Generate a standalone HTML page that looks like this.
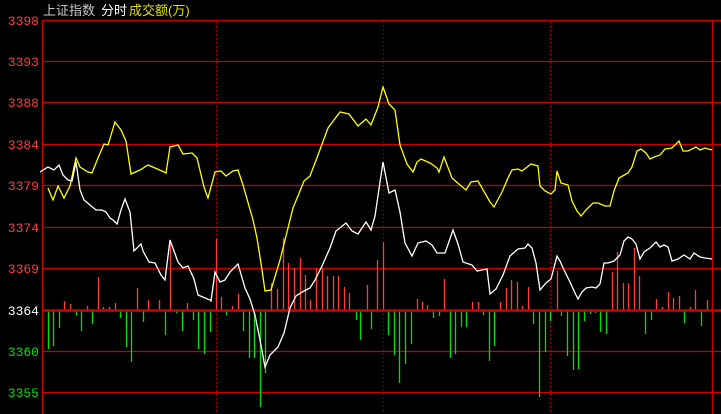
<!DOCTYPE html>
<html><head><meta charset="utf-8"><style>
html,body{margin:0;padding:0;background:#000;width:721px;height:414px;overflow:hidden}
svg{display:block}
text{font-family:"Liberation Sans","Noto Sans CJK SC",sans-serif;font-size:13px}
.ax{font-family:"Liberation Mono","DejaVu Sans Mono",monospace;font-size:13px}
</style></head><body>
<svg width="721" height="414" viewBox="0 0 721 414" xmlns="http://www.w3.org/2000/svg">
<rect width="721" height="414" fill="#000"/>
<text x="43" y="15" fill="#c8c8c8">上证指数</text>
<text x="101" y="15" fill="#ffffff">分时</text>
<text x="129" y="15" fill="#e0e000">成交额(万)</text>
<g stroke="#c80000" stroke-width="1.3">
<line x1="42" y1="20.5" x2="721" y2="20.5"/>
<line x1="42" y1="61.5" x2="721" y2="61.5"/>
<line x1="42" y1="102.5" x2="721" y2="102.5"/>
<line x1="42" y1="144.5" x2="721" y2="144.5"/>
<line x1="42" y1="185.5" x2="721" y2="185.5"/>
<line x1="42" y1="227.5" x2="721" y2="227.5"/>
<line x1="42" y1="268.5" x2="721" y2="268.5"/>
<line x1="42" y1="351.5" x2="721" y2="351.5"/>
<line x1="42" y1="392.5" x2="721" y2="392.5"/>
<line x1="42.5" y1="20" x2="42.5" y2="414"/>
<line x1="712.5" y1="20" x2="712.5" y2="414"/>
</g>
<g stroke="#c80000" stroke-width="1" stroke-dasharray="1,3">
<line x1="216.5" y1="22" x2="216.5" y2="414"/>
<line x1="383.5" y1="22" x2="383.5" y2="414"/>
<line x1="550.5" y1="22" x2="550.5" y2="414"/>
</g>
<g class="ax" text-anchor="end">
<text class="ax" x="39" y="25" fill="#ff3c3c">3398</text>
<text class="ax" x="39" y="66" fill="#ff3c3c">3393</text>
<text class="ax" x="39" y="107" fill="#ff3c3c">3388</text>
<text class="ax" x="39" y="149" fill="#ff3c3c">3384</text>
<text class="ax" x="39" y="190" fill="#ff3c3c">3379</text>
<text class="ax" x="39" y="232" fill="#ff3c3c">3374</text>
<text class="ax" x="39" y="273" fill="#ff3c3c">3369</text>
<text class="ax" x="39" y="315" fill="#ffffff">3364</text>
<text class="ax" x="39" y="356" fill="#00e000">3360</text>
<text class="ax" x="39" y="397" fill="#00e000">3355</text>
</g>
<g stroke="#ff3c3c" stroke-width="1.3" id="red">
<path d="M64.5 310V301M70.5 310V304M87.5 310V306M98.5 310V277M103.5 310V307M109.5 310V307M115.5 310V303M137.5 310V288M148.5 310V300M159.5 310V300M170.5 310V243M187.5 310V303M216.5 310V239M221.5 310V297M232.5 310V306M238.5 310V294M271.5 310V283M277.5 310V289M283.5 310V238M288.5 310V263M294.5 310V268M300.5 310V258M305.5 310V275M310.5 310V300M316.5 310V268M322.5 310V268M327.5 310V276M333.5 310V276M338.5 310V276M344.5 310V287M349.5 310V293M367.5 310V285M377.5 310V260M383.5 310V242M417.5 310V299M422.5 310V302M427.5 310V305M444.5 310V279M472.5 310V302M478.5 310V302M500.5 310V302M506.5 310V288M511.5 310V280M517.5 310V282M522.5 310V306M528.5 310V287M557.5 310V271M612.5 310V272M617.5 310V252M623.5 310V283M628.5 310V283M634.5 310V248M639.5 310V276M656.5 310V299M662.5 310V307M668.5 310V292M673.5 310V298M679.5 310V296M690.5 310V307M695.5 310V290M707.5 310V300"/>
</g>
<g stroke="#00e000" stroke-width="1.3">
<path d="M48.5 311V349M53.5 311V346M59.5 311V328M76.5 311V315M81.5 311V331M92.5 311V324M120.5 311V318M126.5 311V347M131.5 311V362M143.5 311V322M165.5 311V335M176.5 311V313M182.5 311V331M193.5 311V320M198.5 311V349M204.5 311V354M210.5 311V332M226.5 311V315M243.5 311V331M249.5 311V358M254.5 311V358M260.5 311V407M265.5 311V373M356.5 311V320M360.5 311V340M371.5 311V329M388.5 311V335M394.5 311V355M399.5 311V383M405.5 311V364M411.5 311V344M433.5 311V318M439.5 311V316M450.5 311V358M455.5 311V354M461.5 311V327M466.5 311V327M483.5 311V315M489.5 311V361M494.5 311V346M533.5 311V324M539.5 311V397M545.5 311V352M550.5 311V321M561.5 311V316M567.5 311V356M573.5 311V370M578.5 311V369M584.5 311V321M590.5 311V314M595.5 311V313M600.5 311V332M606.5 311V334M645.5 311V334M651.5 311V320M684.5 311V323M701.5 311V326"/>
</g>
<line x1="42" y1="310.5" x2="721" y2="310.5" stroke="#d00000" stroke-width="2.5"/>
<polyline fill="none" stroke="#ffff00" stroke-width="1.3" points="48,188 53,200 58,186 64,198 70,186 76,158 80,167 88,172 92,173 98,158 104,144 108,145 115,122 121,130 126,141 131,174 140,170 148,165 155,168 162,171 166,173 170,147 178,145 183,154 192,153 197,158 204,187 208,198 215,172 221,171 226,176 233,171 238,170 243,185 253,220 257,238 262,270 265,291 271,290 280,260 287,232 293,208 300,191 304,181 310,176 318,155 328,128 340,112 349,114 358,126 366,119 371,125 378,107 383,87 389,104 395,110 400,145 407,164 413,172 417,162 421,159 430,163 437,168 439,172 444,157 452,178 460,185 466,190 471,182 478,181 490,202 494,207 502,192 508,178 512,170 518,169 522,171 531,164 538,166 540,186 545,191 551,194 555,190 557,171 561,183 568,185 572,201 577,211 581,216 586,210 593,203 598,203 605,206 610,206 614,191 619,178 628,173 632,167 637,151 641,149 646,153 650,159 654,157 660,155 665,149 672,148 679,141 683,151 688,151 696,147 700,150 705,148 712,150"/>
<polyline fill="none" stroke="#ffffff" stroke-width="1.3" points="40,172 48,167 54,170 59,165 63,175 68,180 72,181 76,162 80,190 84,200 90,205 96,210 102,210 106,212 110,218 113,220 117,224 121,210 125,199 130,212 134,251 141,244 143,251 149,262 155,263 161,275 165,280 170,240 178,262 183,268 188,266 194,279 198,295 210,300 211,301 215,272 220,282 225,280 230,272 238,264 245,288 250,299 255,315 260,340 265,367 270,355 278,347 284,333 290,308 296,296 304,291 310,288 315,280 322,266 330,248 336,231 346,223 352,231 358,234 366,222 371,230 375,216 383,162 389,193 395,190 400,212 405,243 412,256 418,243 426,241 432,245 437,253 445,253 453,230 458,244 463,262 472,265 477,271 487,269 490,294 496,289 503,275 510,256 518,249 525,248 528,244 532,248 536,263 540,290 546,283 551,279 557,256 560,261 564,270 570,282 575,293 578,299 582,292 586,288 592,287 596,288 600,284 604,263 608,263 614,261 620,255 624,241 628,237 632,239 636,244 640,259 644,252 650,248 656,242 660,247 664,245 668,247 672,261 678,259 684,255 690,259 694,253 700,257 705,258 712,259"/>
</svg>
</body></html>
